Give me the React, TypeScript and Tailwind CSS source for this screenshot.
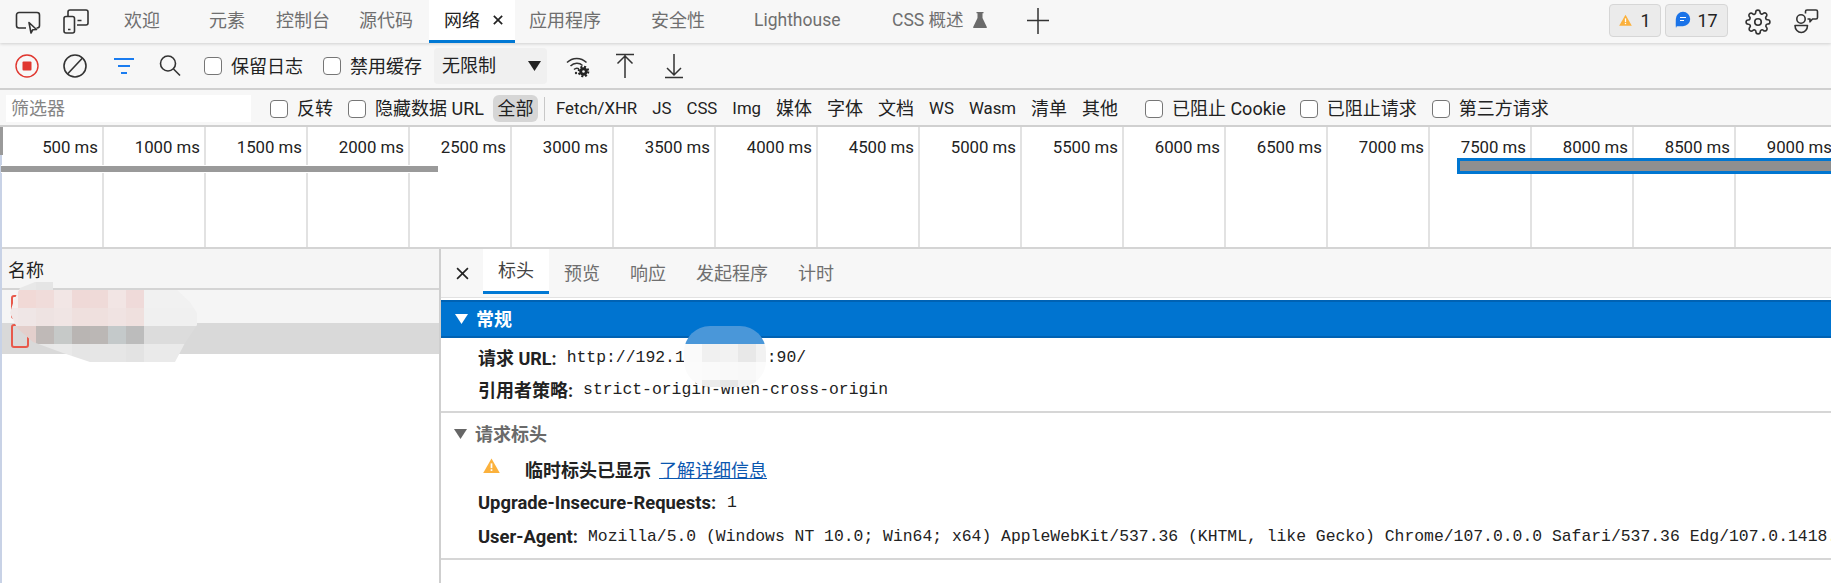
import type { ReactNode } from "react";

const mono = "font-['Liberation_Mono',monospace] text-[16.4px] font-normal";

const timeLabels = [
  500, 1000, 1500, 2000, 2500, 3000, 3500, 4000, 4500, 5000, 5500, 6000, 6500,
  7000, 7500, 8000, 8500, 9000,
];

const topTabs = [
  { label: "欢迎", cls: "w-[66px] pl-[16px]" },
  { label: "元素", cls: "w-[86px] pl-[35px]" },
  { label: "控制台", cls: "w-[84px] pl-[16px]" },
  { label: "源代码", cls: "w-[85px] pl-[15px]" },
];

const resourceFilters = [
  { label: "Fetch/XHR", cls: "text-[16.8px]" },
  { label: "JS", cls: "text-[16.8px]" },
  { label: "CSS", cls: "text-[16.8px]" },
  { label: "Img", cls: "text-[16.8px]" },
  { label: "媒体", cls: "" },
  { label: "字体", cls: "" },
  { label: "文档", cls: "" },
  { label: "WS", cls: "text-[16.8px]" },
  { label: "Wasm", cls: "text-[16.8px]" },
  { label: "清单", cls: "" },
  { label: "其他", cls: "" },
];

const Check = ({ label, className = "" }: { label: ReactNode; className?: string }) => (
  <label className={`flex items-center gap-[9px] whitespace-nowrap ${className}`}>
    <input
      type="checkbox"
      readOnly
      className="appearance-none w-[18px] h-[18px] bg-white border-[1.5px] border-[#767676] rounded-[4px]"
    />
    <span>{label}</span>
  </label>
);

const InspectIcon = () => (
  <svg width="26" height="24" viewBox="0 0 26 24" fill="none" stroke="#333" strokeWidth="1.6" className="shrink-0">
    <path d="M11 18H4a2.5 2.5 0 0 1-2.5-2.500V5A2.500 2.500 0 0 1 4 2.500h18A2.500 2.500 0 0 1 24.500 5v10.500A2.500 2.500 0 0 1 22 18h-.5" />
    <path d="M14 12.500l7.500 7-3.800.3-1.700 3.200z" strokeLinejoin="round" />
  </svg>
);

const DeviceIcon = () => (
  <svg width="26" height="25" viewBox="0 0 26 25" fill="none" stroke="#333" strokeWidth="1.6" className="shrink-0">
    <path d="M5 7V3a2 2 0 0 1 2-2h16a2 2 0 0 1 2 2v11a2 2 0 0 1-2 2h-9" />
    <rect x="1" y="7.500" width="10.500" height="16.500" rx="2" />
    <path d="M5 20.500h2.500M14.500 11.500h4" />
  </svg>
);

const RecordIcon = () => (
  <svg width="24" height="24" viewBox="0 0 24 24" fill="none" className="shrink-0">
    <circle cx="12" cy="12" r="11" stroke="#e0372f" strokeWidth="1.400" />
    <rect x="7.500" y="7.500" width="9" height="9" rx="1" fill="#e0372f" />
  </svg>
);

const ClearIcon = () => (
  <svg width="24" height="24" viewBox="0 0 24 24" fill="none" stroke="#333" strokeWidth="1.600" className="shrink-0">
    <circle cx="12" cy="12" r="11" />
    <path d="M19.500 4L4.500 20" />
  </svg>
);

const FilterIcon = () => (
  <svg width="22" height="18" viewBox="0 0 22 18" fill="none" stroke="#1a7cf0" strokeWidth="1.800" className="shrink-0">
    <path d="M1 2h20M5 9h12M8 16h6" />
  </svg>
);

const SearchIcon = () => (
  <svg width="22" height="24" viewBox="0 0 22 24" fill="none" stroke="#333" strokeWidth="1.600" className="shrink-0">
    <circle cx="9" cy="9.500" r="7.500" />
    <path d="M14.500 15l6.500 6.500" />
  </svg>
);

const WifiGearIcon = () => (
  <svg width="24" height="24" viewBox="0 0 24 24" fill="none" stroke="#333" strokeWidth="1.500" className="shrink-0">
    <path d="M1 8.500C6.500 3 15 3 20.500 8.500" />
    <path d="M4.500 12c3.500-3.500 9-3.500 12-.5" />
    <path d="M8 15.500c1.500-1.500 3.500-1.500 5-.7" />
    <circle cx="10" cy="19" r="1.200" fill="#333" stroke="none" />
    <circle cx="17.500" cy="17.500" r="4.800" stroke="#222" strokeWidth="2" strokeDasharray="2 1.770" fill="none" />
    <circle cx="17.500" cy="17.500" r="4.200" fill="#222" stroke="none" />
    <circle cx="17.500" cy="17.500" r="1.300" fill="#f7f7f7" stroke="none" />
  </svg>
);

const UploadIcon = () => (
  <svg width="20" height="26" viewBox="0 0 20 26" fill="none" stroke="#333" strokeWidth="1.500" className="shrink-0">
    <path d="M1 1.500h18M10 25V2M2.500 10.500L10 3l7.500 7.500" />
  </svg>
);

const DownloadIcon = () => (
  <svg width="20" height="26" viewBox="0 0 20 26" fill="none" stroke="#333" strokeWidth="1.500" className="shrink-0">
    <path d="M1 24.500h18M10 1v21M3 15l7 7 7-7" />
  </svg>
);

const WarnTriangle = ({ w, h }: { w: number; h: number }) => (
  <svg width={w} height={h} viewBox="0 0 16 14" className="shrink-0">
    <path d="M8 0.500L15.800 14H0.200z" fill="#fbb13c" />
    <rect x="7.200" y="5" width="1.600" height="4.500" fill="#fff" />
    <rect x="7.200" y="10.500" width="1.600" height="1.600" fill="#fff" />
  </svg>
);

const MessageIcon = () => (
  <svg width="16" height="18" viewBox="0 0 16 18" className="shrink-0">
    <path d="M8 .8a7.200 7.200 0 0 1 0 14.400H1.800c-.7 1.200-.8 1.800-.8 2C.6 15 .8 11 .8 8A7.200 7.200 0 0 1 8 .8z" fill="#1a73e8" />
    <path d="M5 6.500h6M5 9.500h4" stroke="#fff" strokeWidth="1.200" />
  </svg>
);

const GearIcon = () => (
  <svg width="26" height="28" viewBox="0 0 24 24" fill="none" stroke="#333" strokeWidth="1.500" strokeLinejoin="round" className="shrink-0">
    <circle cx="12" cy="12" r="3" />
    <path d="M19.400 15a1.650 1.650 0 0 0 .33 1.820l.06.06a2 2 0 1 1-2.830 2.830l-.06-.06a1.650 1.650 0 0 0-2.800 1.170V21a2 2 0 1 1-4 0v-.09a1.650 1.650 0 0 0-2.800-1.170l-.06.06a2 2 0 1 1-2.830-2.830l.06-.06a1.650 1.650 0 0 0-1.170-2.800H3a2 2 0 1 1 0-4h.09a1.650 1.650 0 0 0 1.170-2.800l-.06-.06a2 2 0 1 1 2.830-2.830l.06.06a1.650 1.650 0 0 0 2.800-1.170V3a2 2 0 1 1 4 0v.09a1.650 1.650 0 0 0 2.800 1.170l.06-.06a2 2 0 1 1 2.830 2.830l-.06.06a1.650 1.650 0 0 0 1.170 2.800H21a2 2 0 1 1 0 4h-.09a1.650 1.650 0 0 0-1.510 1z" />
  </svg>
);

const FeedbackIcon = () => (
  <svg width="26" height="26" viewBox="0 0 26 26" fill="none" stroke="#333" strokeWidth="1.600" strokeLinejoin="round" className="shrink-0">
    <circle cx="8" cy="10" r="4.200" />
    <path d="M2 16.500h12.500c0 4-2.800 7-6.200 7s-6.300-3-6.300-7z" />
    <path d="M14 1h9a1.500 1.500 0 0 1 1.500 1.500v6A1.500 1.500 0 0 1 23 10h-3.500l-2.500 2.800V10h-2.500" />
    <path d="M14 1a1.500 1.500 0 0 0-1.500 1.500v2" />
  </svg>
);

const CloseIcon = ({ size = 12, color = "#222", weight = 1.600 }: { size?: number; color?: string; weight?: number }) => (
  <svg width={size} height={size} viewBox="0 0 12 12" fill="none" stroke={color} strokeWidth={weight} className="shrink-0">
    <path d="M1 1l10 10M11 1L1 11" />
  </svg>
);

const FlaskIcon = () => (
  <svg width="14" height="16" viewBox="0 0 14 16" className="shrink-0">
    <path d="M3.500 0h7v1.300H9.500V6l4.300 9a.7.7 0 0 1-.6 1H.8a.7.7 0 0 1-.6-1l4.300-9V1.300h-1z" fill="#6b6b6b" />
  </svg>
);

const SmallArrow = ({ color }: { color: string }) => (
  <svg width="13" height="10" viewBox="0 0 13 10" className="shrink-0">
    <path d="M0 0h13L6.500 10z" fill={color} />
  </svg>
);

// mosaic used for the redacted parts of the screenshot
const Mosaic = ({ rows, className }: { rows: { h: string; cells: { w: string; c: string }[] }[]; className: string }) => (
  <div className={`absolute flex flex-col ${className}`}>
    {rows.map((r, i) => (
      <div key={i} className={`flex shrink-0 ${r.h}`}>
        {r.cells.map((cell, j) => (
          <div key={j} className={`shrink-0 h-full ${cell.w} ${cell.c}`} />
        ))}
      </div>
    ))}
  </div>
);

const listBlob = [
  {
    h: "h-[8px]",
    cells: [
      { w: "w-[8px]", c: "bg-[#f1f1f1]" },
      { w: "w-[18px]", c: "bg-[#e8e8e8]" },
      { w: "w-[18px]", c: "bg-[#e5e5e5]" },
      { w: "w-[143px]", c: "bg-[#f3f3f3]" },
    ],
  },
  {
    h: "h-[18px]",
    cells: [
      { w: "w-[8px]", c: "bg-[#f4f1f0]" },
      { w: "w-[18px]", c: "bg-[#f1d9d6]" },
      { w: "w-[18px]", c: "bg-[#f0dcda]" },
      { w: "w-[18px]", c: "bg-[#f2e6e5]" },
      { w: "w-[18px]", c: "bg-[#efd9d7]" },
      { w: "w-[18px]", c: "bg-[#efdad8]" },
      { w: "w-[18px]", c: "bg-[#f2e5e4]" },
      { w: "w-[18px]", c: "bg-[#efdad9]" },
      { w: "w-[53px]", c: "bg-[#f1f1f1]" },
    ],
  },
  {
    h: "h-[18px]",
    cells: [
      { w: "w-[8px]", c: "bg-[#f0e8e8]" },
      { w: "w-[18px]", c: "bg-[#efe6e6]" },
      { w: "w-[18px]", c: "bg-[#eee3e2]" },
      { w: "w-[18px]", c: "bg-[#f0e5e4]" },
      { w: "w-[18px]", c: "bg-[#efe0de]" },
      { w: "w-[18px]", c: "bg-[#efe0de]" },
      { w: "w-[18px]", c: "bg-[#f0e3e2]" },
      { w: "w-[18px]", c: "bg-[#efe0de]" },
      { w: "w-[53px]", c: "bg-[#f0f0f0]" },
    ],
  },
  {
    h: "h-[18px]",
    cells: [
      { w: "w-[8px]", c: "bg-[#e6d0cd]" },
      { w: "w-[18px]", c: "bg-[#e3cfcc]" },
      { w: "w-[18px]", c: "bg-[#bfb9b7]" },
      { w: "w-[18px]", c: "bg-[#c6c9c8]" },
      { w: "w-[18px]", c: "bg-[#b9b5b3]" },
      { w: "w-[18px]", c: "bg-[#bbb7b5]" },
      { w: "w-[18px]", c: "bg-[#c4c9ca]" },
      { w: "w-[18px]", c: "bg-[#bcbcbc]" },
      { w: "w-[53px]", c: "bg-[#dcdcdc]" },
    ],
  },
  {
    h: "h-[18px]",
    cells: [
      { w: "w-[26px]", c: "bg-[#e8e4e4]" },
      { w: "w-[18px]", c: "bg-[#e8e8e8]" },
      { w: "w-[18px]", c: "bg-[#e9e9e9]" },
      { w: "w-[18px]", c: "bg-[#e5e5e5]" },
      { w: "w-[18px]", c: "bg-[#e6e6e6]" },
      { w: "w-[18px]", c: "bg-[#e6e6e6]" },
      { w: "w-[18px]", c: "bg-[#e3e3e3]" },
      { w: "w-[53px]", c: "bg-[#eaeaea]" },
    ],
  },
];

const urlBlob = [
  { h: "h-[18px]", cells: [{ w: "w-[82px]", c: "bg-[#4a97d9]" }] },
  {
    h: "h-[18px]",
    cells: [
      { w: "w-[18px]", c: "bg-[#fafafa]" },
      { w: "w-[18px]", c: "bg-[#f0f0f0]" },
      { w: "w-[18px]", c: "bg-[#f2f2f2]" },
      { w: "w-[18px]", c: "bg-[#e8e8e8]" },
      { w: "w-[10px]", c: "bg-[#f2f2f2]" },
    ],
  },
  {
    h: "h-[18px]",
    cells: [
      { w: "w-[18px]", c: "bg-[#fbfbfb]" },
      { w: "w-[18px]", c: "bg-[#fafafa]" },
      { w: "w-[18px]", c: "bg-[#f9f9f9]" },
      { w: "w-[18px]", c: "bg-[#f8f8f8]" },
      { w: "w-[10px]", c: "bg-[#fbfbfb]" },
    ],
  },
  {
    h: "h-[7px]",
    cells: [
      { w: "w-[18px]", c: "bg-[#fbfbfb]" },
      { w: "w-[18px]", c: "bg-[#ececec]" },
      { w: "w-[18px]", c: "bg-[#e6e6e6]" },
      { w: "w-[18px]", c: "bg-[#f2f2f2]" },
      { w: "w-[10px]", c: "bg-[#fbfbfb]" },
    ],
  },
];

export default function App() {
  return (
    <div className="relative w-[1831px] h-[583px] overflow-hidden bg-white flex flex-col text-[18px] text-[#222] font-['Roboto','Noto_Sans_CJK_SC',sans-serif]">
      {/* main tab strip */}
      <header className="relative z-10 h-[43px] shrink-0 flex items-center bg-[#f7f7f7] shadow-[0_1px_3px_rgba(0,0,0,0.16)]">
        <div className="w-[58px] pl-[15px] flex shrink-0"><InspectIcon /></div>
        <div className="w-[50px] pl-[5px] flex shrink-0"><DeviceIcon /></div>
        {topTabs.map((t) => (
          <div key={t.label} className={`h-full pb-[3px] flex items-center shrink-0 text-[#6f6f6f] ${t.cls}`}>
            {t.label}
          </div>
        ))}
        <div className="h-full w-[86px] shrink-0 flex items-center pl-[15px] gap-[13px] bg-white border-b-[3px] border-[#0078d4]">
          <span>网络</span>
          <CloseIcon size={10} weight={2} />
        </div>
        <div className="h-full w-[86px] pb-[3px] shrink-0 flex items-center pl-[14px] text-[#6f6f6f]">应用程序</div>
        <div className="h-full w-[50px] shrink-0" />
        <div className="h-full w-[103px] pb-[3px] shrink-0 flex items-center text-[#6f6f6f]">安全性</div>
        <div className="h-full w-[138px] pb-[3px] shrink-0 flex items-center text-[17.5px] text-[#6f6f6f]">Lighthouse</div>
        <div className="h-full w-[134px] pb-[3px] shrink-0 flex items-center gap-[9px] text-[17.5px] text-[#6f6f6f]">
          <span className="whitespace-nowrap">CSS 概述</span>
          <FlaskIcon />
        </div>
        <svg width="24" height="26" viewBox="0 0 24 26" stroke="#333" strokeWidth="1.500" className="shrink-0 mb-[2px]">
          <path d="M1 12.500h22M12 0v26" />
        </svg>
        <div className="ml-auto flex items-center h-full">
          <div className="w-[52px] h-[33px] mb-[3px] flex items-center justify-center gap-[8px] bg-[#ebebeb] border border-[#d6d6d6] rounded-[4px]">
            <WarnTriangle w={13} h={12} />
            <span>1</span>
          </div>
          <div className="w-[63px] h-[33px] mb-[3px] ml-[4px] flex items-center justify-center gap-[6px] bg-[#ebebeb] border border-[#d6d6d6] rounded-[4px]">
            <MessageIcon />
            <span>17</span>
          </div>
          <div className="ml-[17px] flex"><GearIcon /></div>
          <div className="ml-[22px] mr-[12px] flex"><FeedbackIcon /></div>
        </div>
      </header>

      {/* network toolbar */}
      <div className="h-[47px] shrink-0 flex items-center bg-[#f7f7f7] border-b-2 border-[#d0d0d0]">
        <div className="w-[63px] pl-[15px] flex shrink-0"><RecordIcon /></div>
        <div className="w-[50px] flex shrink-0"><ClearIcon /></div>
        <div className="w-[46px] flex shrink-0"><FilterIcon /></div>
        <div className="w-[45px] flex shrink-0"><SearchIcon /></div>
        <Check label="保留日志" className="w-[119px] shrink-0 pt-[1px]" />
        <Check label="禁用缓存" className="w-[111px] shrink-0 pt-[1px]" />
        <div className="w-[113px] h-[36px] shrink-0 flex items-center justify-between pl-[8px] pr-[6px] bg-[#f0f0f0] rounded-[4px]">
          <span>无限制</span>
          <svg width="13" height="10" viewBox="0 0 13 10"><path d="M0 0h13L6.500 10z" fill="#222" /></svg>
        </div>
        <div className="ml-[19px] flex shrink-0"><WifiGearIcon /></div>
        <div className="ml-[25px] flex shrink-0"><UploadIcon /></div>
        <div className="ml-[29px] flex shrink-0"><DownloadIcon /></div>
      </div>

      {/* filter bar */}
      <div className="h-[37px] shrink-0 flex items-center bg-[#f7f7f7] border-b-2 border-[#d0d0d0] pl-[6px] pt-[2px]">
        <div className="w-[245px] h-[27px] shrink-0 flex items-center pl-[5px] bg-white text-[#858585]">筛选器</div>
        <Check label="反转" className="ml-[19px] shrink-0" />
        <Check label="隐藏数据 URL" className="ml-[15px] shrink-0" />
        <div className="ml-[9px] w-[45px] h-[27px] shrink-0 flex items-center justify-center bg-[#d6d6d6] rounded-[6px]">全部</div>
        <div className="ml-[6px] w-px h-[24px] shrink-0 bg-[#c8c8c8]" />
        <div className="ml-[11px] w-[564px] flex items-center gap-[15px] shrink-0">
          {resourceFilters.map((f) => (
            <span key={f.label} className={`whitespace-nowrap ${f.cls}`}>{f.label}</span>
          ))}
        </div>
        <Check label="已阻止 Cookie" className="ml-[25px] shrink-0" />
        <Check label="已阻止请求" className="ml-[14px] shrink-0" />
        <Check label="第三方请求" className="ml-[15px] shrink-0" />
      </div>

      {/* timeline overview */}
      <div className="relative h-[122px] shrink-0 flex bg-white border-b-2 border-[#d4d4d4] text-[16.8px]">
        {timeLabels.map((ms) => (
          <div key={ms} className="w-[102px] first:w-[104px] shrink-0 h-full border-r-2 border-[#e2e2e2] pr-[4px] pt-[8px] text-right whitespace-nowrap">
            {ms} ms
          </div>
        ))}
        <div className="absolute left-0 top-0 w-[3px] h-[28px] bg-[#9a9a9a]" />
        <div className="absolute left-0 top-[28px] w-[2px] h-[94px] bg-[#c8d2e6]" />
        <div className="absolute left-[1px] top-[38px] w-[437px] h-[6px] bg-[#9a9a9a] border-y border-white box-content" />
        <div className="absolute left-[1457px] top-[31px] right-0 h-[16px] bg-[#8f8f8f] border-[3px] border-r-0 border-[#0076d1]" />
      </div>

      {/* request list and details */}
      <div className="flex-1 min-h-0 flex">
        <div className="w-[439px] shrink-0 flex flex-col border-l-2 border-[#c8d2e6]">
          <div className="h-[41px] shrink-0 flex items-center pl-[6px] pt-[3px] bg-[#f5f5f5] border-b-2 border-[#d4d4d4]">名称</div>
          <div className="h-[33px] shrink-0 flex items-center pl-[9px] bg-[#f5f5f5]">
            <div className="w-[18px] h-[24px] border-2 border-[#e8594b] rounded-[3px]" />
          </div>
          <div className="h-[31px] shrink-0 flex items-start pt-[1px] pl-[9px] bg-[#d9d9d9]">
            <div className="w-[18px] h-[24px] border-2 border-[#e8594b] rounded-[3px]" />
          </div>
        </div>
        <div className="flex-1 min-w-0 flex flex-col border-l-2 border-[#cfcfcf]">
          <div className="h-[49px] shrink-0 flex items-end bg-[#f7f7f7] border-b border-[#e2e2e2]">
            <div className="w-[42px] h-full flex items-center pl-[15px]">
              <CloseIcon size={13} weight={1.500} />
            </div>
            <div className="w-[66px] h-[45px] mb-[3px] flex items-center justify-center bg-white border-b-[3px] border-[#0078d4] text-[#444]">标头</div>
            <div className="h-full flex items-center gap-[30px] pl-[15px] text-[#6f6f6f]">
              <span>预览</span>
              <span>响应</span>
              <span>发起程序</span>
              <span>计时</span>
            </div>
          </div>
          <div className="h-[38px] shrink-0 mt-[2px] flex items-center pl-[14px] gap-[8px] bg-[#0074d0] border-y-2 border-[#0062b3] text-white font-bold">
            <SmallArrow color="#fff" />
            <span>常规</span>
          </div>
          <div className="h-[75px] shrink-0 pl-[37px] border-b-2 border-[#d6d6d6] flex flex-col pt-[4px]">
            <div className="h-[32px] flex items-center gap-[10px] whitespace-nowrap">
              <b className="font-bold">请求 URL:</b>
              <span className={mono}>http://192.1</span>
              <span className={`${mono} ml-[72px]`}>:90/</span>
            </div>
            <div className="h-[32px] flex items-center gap-[10px] whitespace-nowrap">
              <b className="font-bold">引用者策略:</b>
              <span className={mono}>strict-origin-when-cross-origin</span>
            </div>
          </div>
          <div className="h-[147px] shrink-0 border-b-2 border-[#d6d6d6] flex flex-col">
            <div className="h-[42px] shrink-0 flex items-center pl-[13px] gap-[8px] font-bold text-[#6a6a6a]">
              <SmallArrow color="#666" />
              <span>请求标头</span>
            </div>
            <div className="h-[30px] shrink-0 flex items-center pl-[42px] whitespace-nowrap">
              <span className="mb-[10px] flex"><WarnTriangle w={17} h={15} /></span>
              <b className="ml-[25px] font-bold">临时标头已显示</b>
              <a className="ml-[8px] text-[#0b57b0] underline">了解详细信息</a>
            </div>
            <div className="h-[36px] shrink-0 flex items-center pl-[37px] gap-[11px] whitespace-nowrap">
              <b className="font-bold text-[18.4px]">Upgrade-Insecure-Requests:</b>
              <span className={mono}>1</span>
            </div>
            <div className="h-[32px] shrink-0 flex items-center pl-[37px] gap-[10px] whitespace-nowrap">
              <b className="font-bold text-[18.4px]">User-Agent:</b>
              <span className={mono}>Mozilla/5.0 (Windows NT 10.0; Win64; x64) AppleWebKit/537.36 (KHTML, like Gecko) Chrome/107.0.0.0 Safari/537.36 Edg/107.0.1418.35</span>
            </div>
          </div>
        </div>
      </div>

      {/* redaction smudges */}
      <Mosaic
        rows={listBlob}
        className="left-[10px] top-[282px] w-[187px] h-[80px] [clip-path:polygon(25px_0,43px_0,43px_8px,167px_8px,180px_20px,187px_31px,187px_43px,175px_61px,165px_80px,80px_80px,53px_71px,23px_60px,7px_46px,0_31px,4px_18px,10px_6px)]"
      />
      <Mosaic rows={urlBlob} className="left-[684px] top-[326px] w-[82px] h-[61px] rounded-[26px] overflow-hidden" />
    </div>
  );
}
